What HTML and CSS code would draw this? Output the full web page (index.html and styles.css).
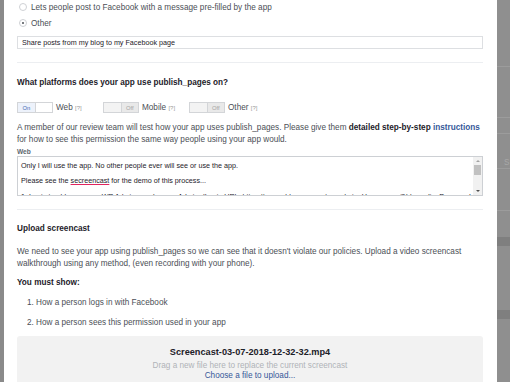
FILE: index.html
```html
<!DOCTYPE html>
<html lang="en">
<head>
    <meta charset="UTF-8">
    <meta name="viewport" content="width=device-width, initial-scale=1.0">
    <title>Permission review</title>
    <link rel="stylesheet" href="styles.css">
</head>
<body>
<div class="shade-left"></div>

<div class="dialog">
    <div class="radio-row">
        <span class="radio"></span>
        <span>Lets people post to Facebook with a message pre-filled by the app</span>
    </div>
    <div class="radio-row second">
        <span class="radio checked"></span>
        <span>Other</span>
    </div>
    <div class="text-input">Share posts from my blog to my Facebook page</div>

    <div class="section">
        <h2>What platforms does your app use publish_pages on?</h2>

        <div class="platforms">
            <div class="platform">
                <span class="toggle on"><span class="half">On</span><span class="half"></span></span>
                <span>Web <span class="hint">[?]</span></span>
            </div>
            <div class="platform">
                <span class="toggle"><span class="half"></span><span class="half">Off</span></span>
                <span>Mobile <span class="hint">[?]</span></span>
            </div>
            <div class="platform">
                <span class="toggle"><span class="half"></span><span class="half">Off</span></span>
                <span>Other <span class="hint">[?]</span></span>
            </div>
        </div>

        <p class="intro">A member of our review team will test how your app uses publish_pages. Please give them <b>detailed step-by-step</b> <a href="#">instructions</a> for how to see this permission the same way people using your app would.</p>

        <div class="field-label">Web</div>
        <div class="notes">
            <div class="notes-text">
                <p>Only I will use the app. No other people ever will see or use the app.</p>
                <p>Please see the <span class="typo">secreencast</span> for the demo of this process...</p>
                <p>1. Login to ablamea.com WP Admin panel, as an Admin. (Login URL: https://www.ablamea.com/wp-admin, Username: @blamedia, Password</p>
            </div>
            <div class="scrollbar">
                <span class="arrow up"></span>
                <span class="thumb"></span>
                <span class="arrow down"></span>
            </div>
        </div>
    </div>

    <div class="section">
        <h2 class="upload-title">Upload screencast</h2>
        <p class="upload-text">We need to see your app using publish_pages so we can see that it doesn't violate our policies. Upload a video screencast walkthrough using any method, (even recording with your phone).</p>
        <h3>You must show:</h3>
        <ol class="steps">
            <li>How a person logs in with Facebook</li>
            <li>How a person sees this permission used in your app</li>
        </ol>

        <div class="dropzone">
            <div class="file-name">Screencast-03-07-2018-12-32-32.mp4</div>
            <div class="drop-hint">Drag a new file here to replace the current screencast</div>
            <a href="#" class="choose">Choose a file to upload...</a>
        </div>
    </div>
</div>

<div class="shade-right">
    <div class="band b1"></div>
    <div class="band b2"></div>
    <div class="band b3"></div>
    <div class="band b4"><span>S</span></div>
    <div class="band b5"></div>
    <div class="band b6"></div>
    <div class="band b7"></div>
</div>
</body>
</html>
```

FILE: styles.css
```css
body {
    margin: 0;
    height: 382px;
    overflow: hidden;
    display: flex;
    background-color: #8e8e8e;
    font-family: "Liberation Sans", Arial, sans-serif;
    font-size: 8.2px;
    color: #4b4f56;
}

.shade-left {
    width: 4px;
    background-color: #8a8a8a;
}

.dialog {
    width: 466px;
    padding: 0 14px 0 13px;
    background-color: #fff;
    overflow: hidden;
}

.radio-row {
    height: 14px;
    display: flex;
    align-items: center;
    padding-left: 2px;
}

.radio-row.second {
    margin-top: 2px;
}

.radio {
    width: 8px;
    height: 8px;
    box-sizing: border-box;
    border: 1px solid #cfd1d5;
    border-radius: 50%;
    margin-right: 4px;
    display: flex;
    align-items: center;
    justify-content: center;
}

.radio.checked::after {
    content: "";
    width: 2px;
    height: 2px;
    border-radius: 50%;
    background-color: #4b4f56;
}

.text-input {
    margin-top: 6px;
    height: 13px;
    box-sizing: border-box;
    border: 1px solid #dddfe2;
    padding-left: 4px;
    font-size: 7.2px;
    line-height: 11px;
    color: #1d2129;
}

.section {
    margin-top: 13px;
    border-top: 1px solid #eceef1;
}

h2, h3 {
    margin: 0;
    font-size: 8.2px;
    line-height: 12px;
    color: #1d2129;
}

.section h2 {
    margin-top: 14px;
}

.platforms {
    margin-top: 13px;
    display: flex;
    height: 11px;
}

.platform {
    width: 86px;
    display: flex;
    align-items: center;
    gap: 3px;
}

.hint {
    font-size: 6px;
    color: #9a9a9a;
}

.toggle {
    width: 36px;
    height: 11px;
    box-sizing: border-box;
    border: 1px solid #d3d5d8;
    display: flex;
    font-size: 5.8px;
    color: #a4a4a4;
}

.toggle .half {
    flex: 1;
    display: flex;
    align-items: center;
    justify-content: center;
    background-color: #f3f3f3;
}

.toggle .half + .half {
    background-color: #e9e9e9;
    border-left: 1px solid #d3d5d8;
}

.toggle.on .half {
    background-color: #edf2fb;
    color: #4267b2;
}

.toggle.on .half + .half {
    background-color: #fff;
}

p {
    margin: 0;
    line-height: 12px;
}

.intro {
    margin-top: 8.5px;
}

b {
    color: #1d2129;
}

a {
    color: #365899;
    text-decoration: none;
}

.intro a {
    font-weight: bold;
}

.field-label {
    margin-top: 1px;
    line-height: 9px;
    font-size: 6.6px;
    font-weight: bold;
    color: #606770;
}

.notes {
    margin-top: 0.5px;
    height: 40px;
    box-sizing: border-box;
    border: 1px solid #cdd0d4;
    display: flex;
    overflow: hidden;
}

.notes-text {
    flex: 1;
    padding: 3.5px 0 0 3px;
    overflow: hidden;
    white-space: nowrap;
    font-size: 7.2px;
    color: #1d2129;
}

.notes-text p {
    line-height: 9px;
    margin-bottom: 6.7px;
}

.typo {
    text-decoration: underline;
    text-decoration-color: #e0245e;
}

.scrollbar {
    width: 9px;
    background-color: #f1f1f1;
    display: flex;
    flex-direction: column;
    align-items: center;
    padding: 3px 0;
}

.arrow {
    width: 0;
    height: 0;
    border-left: 2px solid transparent;
    border-right: 2px solid transparent;
}

.arrow.up {
    border-bottom: 2px solid #a3a3a3;
}

.arrow.down {
    margin-top: auto;
    border-top: 2px solid #505050;
}

.thumb {
    margin-top: 3px;
    width: 7px;
    height: 10px;
    background-color: #c1c1c1;
}

.section .upload-title {
    margin-top: 13px;
}

.upload-text {
    margin-top: 11px;
}

h3 {
    margin-top: 7px;
}

.steps {
    margin: 0;
    padding-left: 19px;
}

.steps li {
    margin-top: 8px;
    line-height: 12px;
}

.dropzone {
    margin-top: 7px;
    padding-top: 10px;
    height: 60px;
    background-color: #f2f2f2;
    border-radius: 3px;
    text-align: center;
}

.file-name {
    font-size: 9.2px;
    font-weight: bold;
    line-height: 12px;
    color: #1d2129;
}

.drop-hint {
    margin-top: 3px;
    line-height: 10px;
    color: #b0b3b8;
}

.choose {
    display: block;
    line-height: 10px;
}

.shade-right {
    flex: 1;
    display: flex;
    flex-direction: column;
    background-color: #8f8f8f;
}

.band {
    border-bottom: 1px solid #9c9c9c;
}

.b1 { height: 66px; }
.b2 { height: 50px; }
.b3 { height: 50px; }
.b4 {
    height: 78px;
    border-top: 1px solid #9c9c9c;
    margin-top: -36px;
    padding-top: 24px;
    box-sizing: border-box;
    color: #a8a8a8;
    padding-left: 7px;
}
.b5 {
    height: 26px;
    border-bottom: 9px solid #7f7f7f;
}
.b6 {
    height: 64px;
    border-bottom: 9px solid #7f7f7f;
}
.b7 { flex: 1; border: none; }
```
